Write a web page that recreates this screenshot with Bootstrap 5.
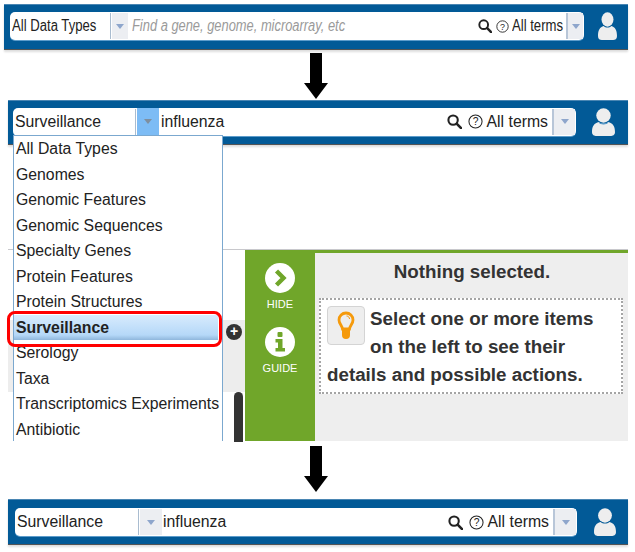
<!DOCTYPE html>
<html lang="en"><head><meta charset="utf-8"><title>Search</title>
<link href="https://cdn.jsdelivr.net/npm/bootstrap@5.3.0/dist/css/bootstrap.min.css" rel="stylesheet">
<style>
html,body{margin:0;background:#fff;font-family:"Liberation Sans",Arial,sans-serif;color:#222;overflow:hidden}
.sheet{width:635px;height:552px;position:relative;padding-top:4px}
.topbar{background:#025a97;border-top:1px solid #4a86b3;border-bottom:1px solid #555;box-shadow:0 2px 2px #ddd;align-items:center}
.bar-a{margin:0 7px 0 4px;height:46px;padding:0 11px 2px 6px}
.bar-b{margin:0 7px 0 8px;height:45px;padding:0 13px 2px 5px}
.bar-c{margin:0 7px 0 8px;height:46px;padding:0 12px 0 7px}
.searchbox{background:#fff;border-radius:5px;flex:1;align-items:center;box-shadow:0 1px 0 #5d9ccb;height:28px;font-size:15.8px}
.bar-a .searchbox{font-size:16px}
.squeeze{display:inline-block;transform:scaleX(.82);transform-origin:left center;white-space:nowrap}
.typebox{flex:none;border-right:1px solid #a9bcd0;height:26px;line-height:26px;padding-left:2px}
.bar-a .typebox{width:101px}.bar-b .typebox{width:123px}.bar-c .typebox{width:124px}
.droptab{flex:none;background:#eceef2;height:26px;margin-left:1px;display:flex;align-items:center;justify-content:center}
.bar-a .droptab{width:16px}.bar-b .droptab,.bar-c .droptab{width:22px}
.droptab.is-on{background:#7dbcf5;height:27px}
.caret-tri{width:0;height:0;border-left:4px solid transparent;border-right:4px solid transparent;border-top:5px solid #8ea6cc}
.is-on .caret-tri{border-top-color:#7f8f9f}
.hinttext{font-style:italic;color:#9a9a9a;padding-left:4px;flex:1}
.hinttext .squeeze{transform:scaleX(.805)}
.termtext{flex:1;padding-left:2px;color:#222}
.bar-c .termtext{padding-left:1px}
.magglass{flex:none}
.qmark{width:13px;height:13px;margin-left:4px;flex:none}
.bar-b .qmark,.bar-c .qmark{width:15px;height:15px;margin-left:6px}
.alltext{white-space:nowrap;margin-left:4px;padding-right:4px;height:26px;line-height:26px}
.bar-a .alltext{width:54px;margin-left:3px}
.endtab{flex:none;background:#eceef2;border-left:2px solid #b8c6d8;height:26px;display:flex;align-items:center;justify-content:center;margin-right:1px}
.bar-a .endtab{width:17px}.bar-b .endtab,.bar-c .endtab{width:23px}
.useravatar{flex:none}
.bar-a .useravatar{margin-left:14px}.bar-b .useravatar{margin-left:16px}.bar-c .useravatar{margin-left:17px}
.arrowwrap{display:flex;justify-content:center}
.arrow-a{height:50px;padding:3px 3px 0 0}
.arrow-b{height:58px;align-items:flex-start;padding:5px 3px 0 0}
.gapzone{height:104px}
.panelrow{height:192px;margin:0 7px 0 8px;display:flex;border-top:1px solid #c8c8cc;position:relative}
.leftpane{width:237px;position:relative;background:#fff}
.greybar{position:absolute;left:0;right:0;top:70px;height:72px;background:#ededed}
.plusdot{position:absolute;left:218px;top:74px;width:16px;height:16px;border-radius:50%;background:#333;color:#fff;font:bold 14px/15px "Liberation Sans",sans-serif;text-align:center}
.scrollthumb{position:absolute;left:226px;top:142px;width:9px;height:50px;background:#333;border-radius:5px 5px 0 0}
.greenrail{width:70px;background:#70a62a;display:flex;flex-direction:column;align-items:center;color:#fff;font-size:11px;padding-top:13px}
.greenrail span{margin:5px 0 16px;line-height:13px}
.detailpane{flex:1;background:#eee;border-top:3px solid #70a62a;padding:7px 5px 0 4px}
.nothinghead{font-weight:700;font-size:18.8px;line-height:24px;text-align:center;color:#333;margin:0 0 14px;padding-left:2px}
.tipbox{background:#fff;border:2px dotted #a5a5a5;padding:5px 6px 4px 6px;font-weight:700;font-size:18.8px;line-height:28px;color:#333;height:96px;white-space:nowrap}
.bulbbox{float:left;width:38px;height:39px;background:#eee;border:1px solid #d4d4d4;border-radius:4px;margin:1px 5px 0 0;display:flex;align-items:center;justify-content:center}
.typemenu{position:absolute;left:13px;top:135px;width:210px;height:306px;background:#fff;border:1px solid #7ba8cf;border-bottom:0;font-size:15.8px;margin:0;padding:0;list-style:none;color:#222;overflow:hidden;z-index:3}
.typemenu li{height:25.5px;line-height:25.5px;padding-left:2px;white-space:nowrap}
.typemenu li.pickedrow{font-weight:700;background:linear-gradient(#d8ebfd,#b5d8f8 80%,#8fb7dc);margin-right:4px}
.redring{position:absolute;left:7px;top:311px;width:215px;height:36px;border:3.5px solid #f00;border-radius:8px;z-index:4}
</style></head><body>
<div class="sheet">
 <div class="topbar bar-a d-flex">
  <div class="searchbox d-flex">
   <div class="typebox"><span class="squeeze">All Data Types</span></div>
   <div class="droptab"><i class="caret-tri"></i></div>
   <div class="hinttext"><span class="squeeze">Find a gene, genome, microarray, etc</span></div>
   <svg class="magglass" width="14" height="14" viewBox="0 0 16 16"><circle cx="6.500" cy="6.500" r="5" fill="none" stroke="#222" stroke-width="2.200"/><path d="M10.500 10.500 15 15" stroke="#222" stroke-width="2.800" stroke-linecap="round"/></svg>
   <svg class="qmark" viewBox="0 0 16 16"><circle cx="8" cy="8" r="7" fill="none" stroke="#222" stroke-width="1.100"/><text x="8" y="12" text-anchor="middle" font-size="11" font-family="Liberation Sans" fill="#222">?</text></svg>
   <div class="alltext"><span class="squeeze">All terms</span></div>
   <div class="endtab"><i class="caret-tri"></i></div>
  </div>
  <svg class="useravatar" width="19" height="28" viewBox="0 0 20 28" preserveAspectRatio="none"><ellipse cx="10" cy="7.500" rx="6.300" ry="7.200" fill="#eee"/><path d="M0 24c0-6 2-9 6-10 2 2 6 2 8 0 4 1 6 4 6 10 0 3-2 4-4 4H4c-2 0-4-1-4-4z" fill="#eee"/></svg>
 </div>
 <div class="arrowwrap arrow-a"><svg width="24" height="46" viewBox="0 0 24 46"><path d="M6 0h12v30h6L12 46 0 30h6z" fill="#000"/></svg></div>
 <div class="topbar bar-b d-flex">
  <div class="searchbox d-flex">
   <div class="typebox">Surveillance</div>
   <div class="droptab is-on"><i class="caret-tri"></i></div>
   <div class="termtext">influenza</div>
   <svg class="magglass" width="15" height="15" viewBox="0 0 16 16"><circle cx="6.500" cy="6.500" r="5" fill="none" stroke="#222" stroke-width="2.200"/><path d="M10.500 10.500 15 15" stroke="#222" stroke-width="2.800" stroke-linecap="round"/></svg>
   <svg class="qmark" viewBox="0 0 16 16"><circle cx="8" cy="8" r="7" fill="none" stroke="#222" stroke-width="1.100"/><text x="8" y="12" text-anchor="middle" font-size="11" font-family="Liberation Sans" fill="#222">?</text></svg>
   <div class="alltext">All terms</div>
   <div class="endtab"><i class="caret-tri"></i></div>
  </div>
  <svg class="useravatar" width="23" height="28" viewBox="0 0 20 28" preserveAspectRatio="none"><ellipse cx="10" cy="7.500" rx="6.300" ry="7.200" fill="#eee"/><path d="M0 24c0-6 2-9 6-10 2 2 6 2 8 0 4 1 6 4 6 10 0 3-2 4-4 4H4c-2 0-4-1-4-4z" fill="#eee"/><path d="M6 14.500c2 2 6 2 8 0" fill="none" stroke="#3f8cc4" stroke-width="1"/></svg>
 </div>
 <div class="gapzone"></div>
 <div class="panelrow">
  <div class="leftpane"><div class="greybar"></div><div class="plusdot">+</div><div class="scrollthumb"></div></div>
  <div class="greenrail">
   <svg width="30" height="30" viewBox="0 0 30 30"><circle cx="15" cy="15" r="15" fill="#fff"/><path d="M11.500 8 18.500 15 11.500 22" fill="none" stroke="#70a62a" stroke-width="4.400"/></svg>
   <span>HIDE</span>
   <svg width="30" height="30" viewBox="0 0 30 30"><circle cx="15" cy="15" r="15" fill="#fff"/><rect x="12.500" y="5" width="5" height="5" rx="1" fill="#70a62a"/><path d="M10.500 12h7v9h2.500v3.500h-9.500V21h2.500v-5.500h-2.500z" fill="#70a62a"/></svg>
   <span>GUIDE</span>
  </div>
  <div class="detailpane">
   <p class="nothinghead">Nothing selected.</p>
   <div class="tipbox"><div class="bulbbox"><svg width="18" height="29" viewBox="0 0 18 29"><path d="M9 2a7 7 0 0 0-7 7c0 3.500 3 5.500 3.500 9h7c.5-3.500 3.500-5.500 3.500-9a7 7 0 0 0-7-7z" fill="none" stroke="#f59a0c" stroke-width="2.800"/><path d="M5 18h8v6a4 4 0 0 1-8 0z" fill="#f59a0c"/><path d="M9.500 5c2 0 3 1.500 3 3" fill="none" stroke="#f59a0c" stroke-width="1"/></svg></div>Select one or more items<br>on the left to see their<br>details and possible actions.</div>
  </div>
 </div>
 <div class="arrowwrap arrow-b"><svg width="24" height="46" viewBox="0 0 24 46"><path d="M6 0h12v30h6L12 46 0 30h6z" fill="#000"/></svg></div>
 <div class="topbar bar-c d-flex">
  <div class="searchbox d-flex">
   <div class="typebox">Surveillance</div>
   <div class="droptab"><i class="caret-tri"></i></div>
   <div class="termtext">influenza</div>
   <svg class="magglass" width="15" height="15" viewBox="0 0 16 16"><circle cx="6.500" cy="6.500" r="5" fill="none" stroke="#222" stroke-width="2.200"/><path d="M10.500 10.500 15 15" stroke="#222" stroke-width="2.800" stroke-linecap="round"/></svg>
   <svg class="qmark" viewBox="0 0 16 16"><circle cx="8" cy="8" r="7" fill="none" stroke="#222" stroke-width="1.100"/><text x="8" y="12" text-anchor="middle" font-size="11" font-family="Liberation Sans" fill="#222">?</text></svg>
   <div class="alltext">All terms</div>
   <div class="endtab"><i class="caret-tri"></i></div>
  </div>
  <svg class="useravatar" width="22" height="28" viewBox="0 0 20 28" preserveAspectRatio="none"><ellipse cx="10" cy="7.500" rx="6.300" ry="7.200" fill="#eee"/><path d="M0 24c0-6 2-9 6-10 2 2 6 2 8 0 4 1 6 4 6 10 0 3-2 4-4 4H4c-2 0-4-1-4-4z" fill="#eee"/></svg>
 </div>
 <ul class="typemenu">
  <li>All Data Types</li><li>Genomes</li><li>Genomic Features</li><li>Genomic Sequences</li><li>Specialty Genes</li><li>Protein Features</li><li>Protein Structures</li><li class="pickedrow">Surveillance</li><li>Serology</li><li>Taxa</li><li>Transcriptomics Experiments</li><li>Antibiotic</li>
 </ul>
 <div class="redring"></div>
</div>
<script src="https://cdn.jsdelivr.net/npm/bootstrap@5.3.0/dist/js/bootstrap.bundle.min.js"></script>
</body></html>
